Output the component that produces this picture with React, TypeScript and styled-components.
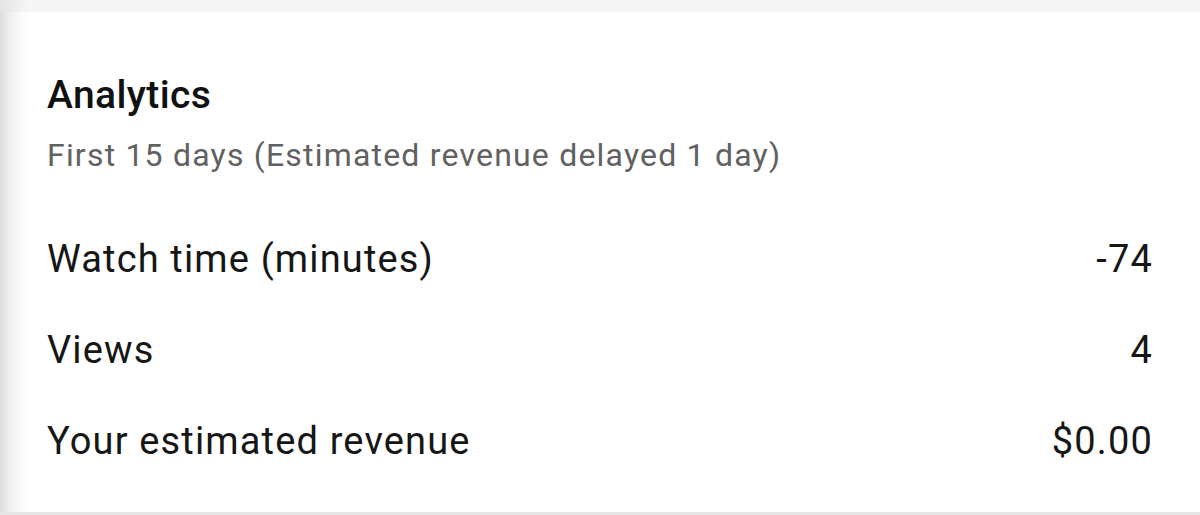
import React from "react";
import styled, { createGlobalStyle } from "styled-components";

const GlobalStyle = createGlobalStyle`
  html, body {
    margin: 0;
    padding: 0;
    background: #ffffff;
  }
  body {
    font-family: Roboto, "Noto Sans", Arial, sans-serif;
  }
`;

type Metric = {
  label: string;
  value: string;
};

const metrics: Metric[] = [
  { label: "Watch time (minutes)", value: "-74" },
  { label: "Views", value: "4" },
  { label: "Your estimated revenue", value: "$0.00" },
];

export default function App() {
  return (
    <>
      <GlobalStyle />
      <StyledScreen>
        <StyledTopStrip />
        <StyledCard>
          <StyledTitle>Analytics</StyledTitle>
          <StyledSubtitle>
            First 15 days (Estimated revenue delayed 1 day)
          </StyledSubtitle>
          <StyledList>
            {metrics.map((m) => (
              <StyledRow key={m.label}>
                <StyledLabel>{m.label}</StyledLabel>
                <StyledValue>{m.value}</StyledValue>
              </StyledRow>
            ))}
          </StyledList>
        </StyledCard>
        <StyledBottomStrip />
      </StyledScreen>
    </>
  );
}

const StyledScreen = styled.div`
  display: flex;
  flex-direction: column;
  width: 1200px;
  height: 515px;
  overflow: hidden;
`;

const StyledTopStrip = styled.div`
  height: 12px;
  flex-shrink: 0;
  background: linear-gradient(to right, #e4e4e4 0px, #f5f5f5 28px);
`;

const StyledCard = styled.div`
  flex: 1;
  display: flex;
  flex-direction: column;
  padding: 61px 48px 0 47px;
  background: linear-gradient(
    to right,
    #dcdcdc 0px,
    #efefef 10px,
    #fbfbfb 22px,
    #ffffff 30px
  );
`;

const StyledTitle = styled.h2`
  margin: 0;
  color: #111111;
  font-family: Roboto, sans-serif;
  font-size: 39px;
  font-weight: 500;
  line-height: 44px;
  letter-spacing: 0.4px;
`;

const StyledSubtitle = styled.p`
  margin: 18px 0 0;
  color: #616161;
  font-family: Roboto, sans-serif;
  font-size: 32px;
  font-weight: 400;
  line-height: 40px;
  letter-spacing: 1.2px;
`;

const StyledList = styled.div`
  display: flex;
  flex-direction: column;
  margin-top: 38px;
`;

const StyledRow = styled.div`
  display: flex;
  justify-content: space-between;
  align-items: center;
  height: 91px;
`;

const StyledLabel = styled.span`
  color: #161616;
  font-family: Roboto, sans-serif;
  font-size: 38px;
  font-weight: 400;
  line-height: 44px;
  letter-spacing: 1.15px;
`;

const StyledValue = styled(StyledLabel)`
  text-align: right;
  margin-right: -1px;
`;

const StyledBottomStrip = styled.div`
  height: 3px;
  flex-shrink: 0;
  background: #e6e6e6;
`;
